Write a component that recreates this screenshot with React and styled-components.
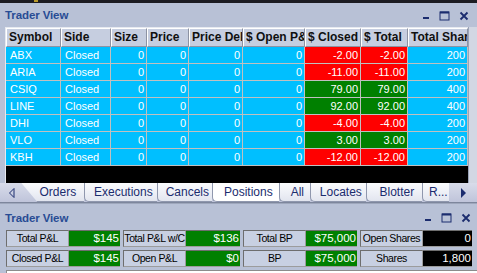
import React from 'react'
import styled, { createGlobalStyle } from 'styled-components'

const Global = createGlobalStyle`
  html, body { margin: 0; padding: 0; background: #ffffff; }
  body { font-family: Tahoma, "Liberation Sans", Arial, sans-serif; font-size: 11px; }
`

const columns = [
  { key: 'symbol', title: 'Symbol', width: 55, align: 'left' },
  { key: 'side', title: 'Side', width: 50, align: 'left' },
  { key: 'size', title: 'Size', width: 36 },
  { key: 'price', title: 'Price', width: 42 },
  { key: 'delta', title: 'Price Delta', width: 54 },
  { key: 'open', title: '$ Open P&L', width: 62 },
  { key: 'closed', title: '$ Closed P&L', width: 56, pnl: true },
  { key: 'total', title: '$ Total', width: 47, pnl: true },
  { key: 'shares', title: 'Total Shares', width: 60 },
]

const rows = [
  { symbol: 'ABX', pnl: '-2.00', shares: 200 },
  { symbol: 'ARIA', pnl: '-11.00', shares: 200 },
  { symbol: 'CSIQ', pnl: '79.00', shares: 400 },
  { symbol: 'LINE', pnl: '92.00', shares: 400 },
  { symbol: 'DHI', pnl: '-4.00', shares: 200 },
  { symbol: 'VLO', pnl: '3.00', shares: 200 },
  { symbol: 'KBH', pnl: '-12.00', shares: 200 },
]

const tabs = [
  { label: 'Orders', width: 63 },
  { label: 'Executions', width: 73 },
  { label: 'Cancels', width: 55 },
  { label: 'Positions', width: 67, active: true },
  { label: 'All', width: 31 },
  { label: 'Locates', width: 56 },
  { label: 'Blotter', width: 56 },
  { label: 'R...', width: 27 },
]

const stats = [
  [
    { label: 'Total P&L', value: '$145', lw: 63, vw: 51, tone: 'green' },
    { label: 'Total P&L w/C', value: '$136', lw: 63, vw: 54, tone: 'green' },
    { label: 'Total BP', value: '$75,000', lw: 63, vw: 51, tone: 'green' },
    { label: 'Open Shares', value: '0', lw: 63, vw: 49, tone: 'black' },
  ],
  [
    { label: 'Closed P&L', value: '$145', lw: 63, vw: 51, tone: 'green' },
    { label: 'Open P&L', value: '$0', lw: 63, vw: 54, tone: 'green' },
    { label: 'BP', value: '$75,000', lw: 63, vw: 51, tone: 'green' },
    { label: 'Shares', value: '1,800', lw: 63, vw: 49, tone: 'black' },
  ],
]

const template = columns.map(c => c.width + 'px').join(' ')

function WindowButtons() {
  return (
    <Buttons>
      <svg width="8" height="10" viewBox="0 0 8 10">
        <rect x="1" y="6" width="6" height="2" fill="#1b2c6e" />
      </svg>
      <svg width="11" height="10" viewBox="0 0 11 10">
        <rect x="1" y="1" width="9" height="8" fill="none" stroke="#1b2c6e" strokeWidth="1" />
        <rect x="1" y="0.5" width="9" height="2" fill="#1b2c6e" />
      </svg>
      <svg width="10" height="10" viewBox="0 0 10 10">
        <path d="M1.5 1.5 L8.5 8.5 M8.5 1.5 L1.5 8.5" stroke="#1b2c6e" strokeWidth="1.8" />
      </svg>
    </Buttons>
  )
}

export default function App() {
  return (
    <Screen>
      <Global />
      <TopStrip><Spark /></TopStrip>
      <Window>
        <TitleBar>
          <Title>Trader View</Title>
          <WindowButtons />
        </TitleBar>
        <GridArea>
          <Grid>
            <HeaderRow>
              {columns.map(c => (
                <HeaderCell key={c.key}>{c.title}</HeaderCell>
              ))}
            </HeaderRow>
            {rows.map(r => {
              const tone = r.pnl.startsWith('-') ? 'red' : 'green'
              const values = {
                symbol: r.symbol, side: 'Closed', size: 0, price: 0, delta: 0, open: 0,
                closed: r.pnl, total: r.pnl, shares: r.shares,
              }
              return (
                <Row key={r.symbol}>
                  {columns.map(c => (
                    <Cell key={c.key} $align={c.align} $tone={c.pnl ? tone : 'cyan'}>
                      {values[c.key]}
                    </Cell>
                  ))}
                </Row>
              )
            })}
            <Empty />
          </Grid>
          <SideGutter />
        </GridArea>
        <TabStrip>
          <Arrow>
            <svg width="8" height="12" viewBox="0 0 8 12">
              <path d="M6 1.5 L1.5 6 L6 10.5 Z" fill="none" stroke="#1b2c6e" strokeWidth="1" />
            </svg>
          </Arrow>
          <Tabs>
            {tabs.map((t, i) => (
              <Tab key={t.label} $width={t.width} $active={t.active} $first={i === 0}>
                {t.label}
              </Tab>
            ))}
          </Tabs>
          <Arrow $right>
            <svg width="8" height="12" viewBox="0 0 8 12">
              <path d="M2 1 L7 6 L2 11 Z" fill="#1b2c6e" />
            </svg>
          </Arrow>
        </TabStrip>
      </Window>
      <Window $lower>
        <TitleBar $lower>
          <Title>Trader View</Title>
          <WindowButtons />
        </TitleBar>
        <Stats>
          {stats.map((line, i) => (
            <StatRow key={i}>
              {line.map(s => (
                <StatGroup key={s.label}>
                  <StatLabel $width={s.lw}>{s.label}</StatLabel>
                  <StatValue $width={s.vw} $tone={s.tone}>{s.value}</StatValue>
                </StatGroup>
              ))}
            </StatRow>
          ))}
        </Stats>
        <NextPanel />
      </Window>
    </Screen>
  )
}

const Screen = styled.div`
  width: 477px;
  height: 273px;
  overflow: hidden;
  background: #b8c1d6;
  display: flex;
  flex-direction: column;
`

const TopStrip = styled.div`
  height: 3px;
  background: #1c1c22;
  position: relative;
`

const Spark = styled.div`
  position: absolute;
  left: 34px;
  top: 0;
  width: 4px;
  height: 2px;
  background: #b89a2a;
`

const Window = styled.div`
  display: flex;
  flex-direction: column;
  background: #b8c1d6;
  ${({ $lower }) => $lower && `
    border-top: 1px solid #7d869c;
    box-shadow: inset 0 1px 0 #9ea7bc;
    padding-top: 2px;
    flex: 1;
  `}
`

const TitleBar = styled.div`
  height: ${({ $lower }) => ($lower ? '21px' : '24px')};
  display: flex;
  align-items: center;
  justify-content: space-between;
  padding: ${({ $lower }) => ($lower ? '2px 6px 0 5px' : '0 8px 0 5px')};
`

const Title = styled.div`
  font-family: Tahoma, "Liberation Sans", Arial, sans-serif;
  font-weight: bold;
  font-size: 11.5px;
  color: #284c94;
  letter-spacing: -0.1px;
`

const Buttons = styled.div`
  display: flex;
  align-items: center;
  gap: 9px;
  padding-top: 1px;
`

const GridArea = styled.div`
  display: flex;
  padding-left: 5px;
`

const Grid = styled.div`
  width: 462px;
  border-left: 1px solid #e6e9f0;
  border-top: 1px solid #e6e9f0;
  background: #000000;
  display: flex;
  flex-direction: column;
`

const SideGutter = styled.div`
  flex: 1;
  background: #d2d7e3;
  border-left: 1px solid #9aa3b8;
`

const HeaderRow = styled.div`
  display: grid;
  grid-template-columns: ${template};
  height: 19px;
`

const HeaderCell = styled.div`
  background: #c6cee0;
  border-top: 1px solid #ffffff;
  border-left: 1px solid #ffffff;
  border-right: 1px solid #8d93a3;
  border-bottom: 1px solid #8d93a3;
  font-weight: bold;
  font-size: 12px;
  color: #101010;
  padding: 0 0 0 2px;
  line-height: 17px;
  white-space: nowrap;
  overflow: hidden;
`

const Row = styled.div`
  display: grid;
  grid-template-columns: ${template};
  height: 17px;
`

const toneColor = {
  cyan: '#00bfff',
  red: '#ff0000',
  green: '#008000',
  black: '#000000',
}

const Cell = styled.div`
  background: ${({ $tone }) => toneColor[$tone]};
  color: #ffffff;
  border-right: 1px solid #c0c0c0;
  border-bottom: 1px solid #c0c0c0;
  text-align: ${({ $align }) => $align || 'right'};
  padding: ${({ $align }) => ($align === 'left' ? '0 2px 0 4px' : '0 2px 0 2px')};
  line-height: 16px;
  white-space: nowrap;
  overflow: hidden;
`

const Empty = styled.div`
  height: 17px;
  background: #000000;
`

const TabStrip = styled.div`
  height: 19px;
  display: flex;
  align-items: stretch;
  background: linear-gradient(#d8dcea, #bfc4da);
`

const Arrow = styled.div`
  width: ${({ $right }) => ($right ? '29px' : '22px')};
  display: flex;
  align-items: center;
  justify-content: ${({ $right }) => ($right ? 'center' : 'flex-start')};
  padding-left: ${({ $right }) => ($right ? '0' : '8px')};
  box-sizing: border-box;
`

const Tabs = styled.div`
  display: flex;
  align-items: stretch;
`

const Tab = styled.div`
  position: relative;
  width: ${({ $width }) => $width}px;
  box-sizing: border-box;
  background: ${({ $active }) => ($active ? '#ffffff' : 'linear-gradient(#fbfcfe, #e2e5ef)')};
  border-left: 1px solid #8f97ad;
  border-bottom: 1px solid #8f97ad;
  border-bottom-left-radius: 5px;
  color: #1b2c6e;
  font-size: 12px;
  display: flex;
  align-items: center;
  justify-content: center;
  padding-left: ${({ $first }) => ($first ? '10px' : '4px')};
  white-space: nowrap;
  overflow: hidden;
  ${({ $first }) => $first && `
    border-left: none;
    clip-path: polygon(0 0, 100% 0, 100% 100%, 16px 100%);
    background: linear-gradient(#fbfcfe, #e2e5ef);
  `}
`

const Stats = styled.div`
  display: flex;
  flex-direction: column;
  gap: 3px;
  padding: 2px 0 0 6px;
`

const StatRow = styled.div`
  display: flex;
  gap: 3px;
  height: 17px;
`

const StatGroup = styled.div`
  display: flex;
`

const StatLabel = styled.div`
  width: ${({ $width }) => $width}px;
  box-sizing: border-box;
  background: #c8d0e2;
  border-top: 1px solid #6e6e6e;
  border-left: 1px solid #6e6e6e;
  border-right: 1px solid #9c9c9c;
  border-bottom: 1px solid #9c9c9c;
  color: #000000;
  font-size: 10.5px;
  letter-spacing: -0.4px;
  text-align: center;
  line-height: 15px;
  white-space: nowrap;
  overflow: hidden;
`

const StatValue = styled.div`
  width: ${({ $width }) => $width}px;
  box-sizing: border-box;
  background: ${({ $tone }) => toneColor[$tone]};
  border-top: 1px solid #6e6e6e;
  border-bottom: 1px solid #9c9c9c;
  color: #ffffff;
  font-size: 11.5px;
  text-align: right;
  padding-right: 1px;
  line-height: 15px;
  white-space: nowrap;
`

const NextPanel = styled.div`
  margin: 3px 0 0 6px;
  flex: 1;
  background: #ffffff;
  border-top: 1px solid #8c8c8c;
  border-left: 1px solid #8c8c8c;
`
